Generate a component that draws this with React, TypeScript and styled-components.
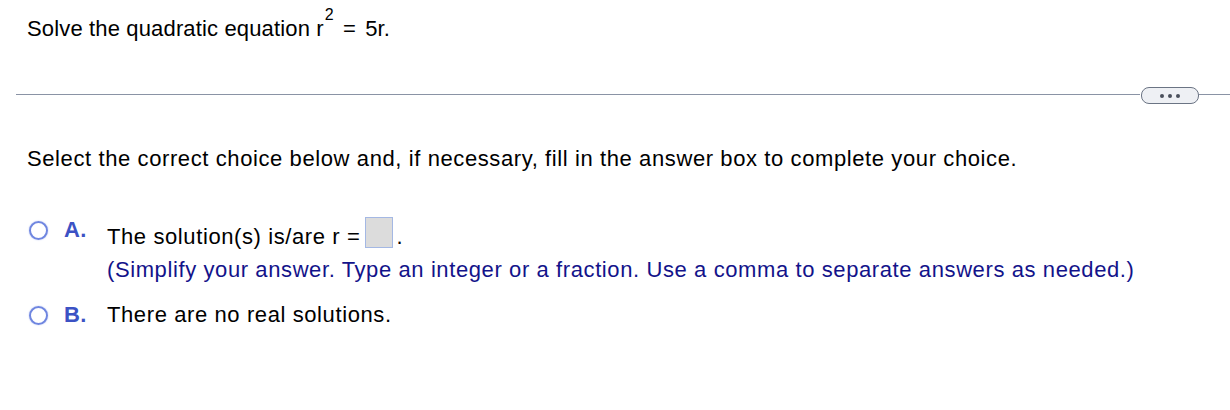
import React from "react";
import styled, { createGlobalStyle } from "styled-components";

const Global = createGlobalStyle`
  html, body { margin: 0; padding: 0; background: #ffffff; }
  body {
    font-family: "Liberation Sans", Arial, sans-serif;
    color: #000;
    font-size: 22px;
    letter-spacing: 0.6px;
  }
`;

const Page = styled.div`
  width: 1230px;
  height: 410px;
  display: flex;
  flex-direction: column;
  overflow: hidden;
`;

const Question = styled.div`
  padding: 17px 0 0 27px;
  line-height: 24px;
  letter-spacing: 0.15px;
`;

const Sup = styled.span`
  font-size: 16px;
  line-height: 0;
  position: relative;
  top: -16px;
  margin-left: 1px;
  margin-right: 9px;
`;

const DividerRow = styled.div`
  display: flex;
  align-items: flex-start;
  margin-top: 46px;
  padding-left: 16px;
  height: 17px;
`;

const Rule = styled.div<{ $grow?: boolean }>`
  height: 1px;
  margin-top: 7px;
  background: #8a93a5;
  flex: ${(p) => (p.$grow ? "1" : "0 0 31px")};
`;

const MoreButton = styled.div`
  box-sizing: border-box;
  width: 58px;
  height: 17px;
  margin-left: 1px;
  border: 1px solid #6b7484;
  border-radius: 8px;
  background: #eef0f4;
  display: flex;
  align-items: center;
  justify-content: center;
  gap: 4px;
`;

const Dot = styled.span`
  width: 4px;
  height: 4px;
  border-radius: 50%;
  background: #4a505c;
`;

const Instruction = styled.div`
  padding: 43px 0 0 27px;
  line-height: 24px;
`;

const Choices = styled.div`
  display: flex;
  flex-direction: column;
  padding: 46px 0 0 27px;
`;

const Choice = styled.div<{ $gap: number }>`
  display: grid;
  grid-template-columns: 37px 43px 1fr;
  align-items: start;
  margin-bottom: ${(p) => p.$gap}px;
`;

const Radio = styled.span<{ $drop: number }>`
  box-sizing: border-box;
  width: 19px;
  height: 19px;
  border: 2px solid #6f86e0;
  border-radius: 50%;
  margin: ${(p) => p.$drop}px 0 0 2px;
  box-shadow: 0 0 1.5px #a9b6ee;
`;

const Letter = styled.span<{ $drop: number }>`
  font-weight: bold;
  color: #3c52c4;
  line-height: 24px;
  letter-spacing: 0.3px;
  margin-top: ${(p) => p.$drop}px;
`;

const Body = styled.div`
  line-height: 24px;
`;

const AnswerBox = styled.span`
  box-sizing: border-box;
  display: inline-block;
  width: 28px;
  height: 31px;
  background: #dcdcdc;
  border: 1px solid #a4b8e4;
  vertical-align: -4px;
  margin: 0 3px 0 5px;
`;

const Hint = styled.div`
  color: #13138a;
  margin-top: 9px;
`;

const Wide = styled.span`
  margin-left: 3px;
`;

export default function App() {
  return (
    <Page>
      <Global />
      <Question>
        Solve the quadratic equation r<Sup>2</Sup>= <Wide>5r.</Wide>
      </Question>
      <DividerRow>
        <Rule $grow />
        <MoreButton>
          <Dot />
          <Dot />
          <Dot />
        </MoreButton>
        <Rule />
      </DividerRow>
      <Instruction>
        Select the correct choice below and, if necessary, fill in the answer box to complete your choice.
      </Instruction>
      <Choices>
        <Choice $gap={21}>
          <Radio $drop={4} />
          <Letter $drop={1}>A.</Letter>
          <Body>
            The solution(s) is/are r =<AnswerBox />.
            <Hint>
              (Simplify your answer. Type an integer or a fraction. Use a comma to separate answers as needed.)
            </Hint>
          </Body>
        </Choice>
        <Choice $gap={0}>
          <Radio $drop={3} />
          <Letter $drop={0}>B.</Letter>
          <Body>There are no real solutions.</Body>
        </Choice>
      </Choices>
    </Page>
  );
}
